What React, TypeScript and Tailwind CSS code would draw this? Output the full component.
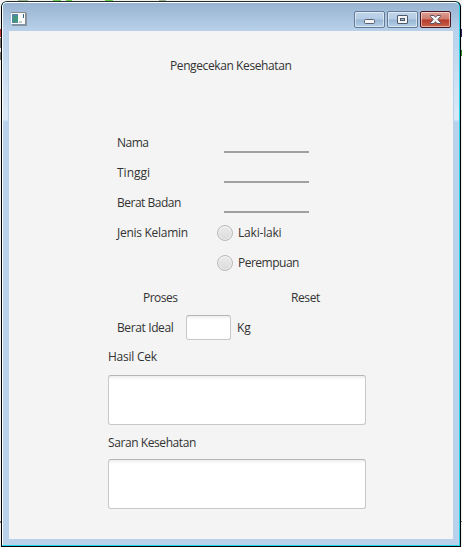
import React from "react";

const BUTTON =
  "relative flex h-[17px] w-[31px] items-center justify-center rounded-[2px] border shadow-[inset_0_0_0_1px_rgba(255,255,255,0.5)]";
const BLUE =
  "border-[#667a98] bg-[linear-gradient(#bfd5eb_0%,#b4cce4_48%,#98b6d4_52%,#b4cfe8_100%)]";
const RED =
  "border-[#4b1520] bg-[linear-gradient(#dda196_0%,#cf7a6c_48%,#b6392a_52%,#c9634b_100%)]";

function TitleBar() {
  return (
    <header className="flex h-7 shrink-0 items-start justify-between bg-[linear-gradient(#98b4d2,#b9d1ea)] pl-2 pr-[8px] pt-2">
      <svg className="mt-[1px]" width="16" height="14" shapeRendering="crispEdges">
        <rect x="1" y="1" width="15" height="13" fill="#8494a4" />
        <rect x="0" y="0" width="15" height="12" fill="#8c8c8c" />
        <rect x="0" y="1" width="14" height="11" fill="#fafafa" />
        <rect x="1" y="2" width="6" height="9" fill="#5686a4" />
        <rect x="2" y="4" width="5" height="6" fill="#43977f" />
        <rect x="12" y="2" width="1" height="4" fill="#346a91" />
        <rect x="8" y="9" width="3" height="2" fill="#c9c9c9" />
      </svg>
      <div className="flex gap-[2px]">
        <button aria-label="Minimize" className={`${BUTTON} ${BLUE}`}>
          <svg width="29" height="15" viewBox="0 0 29 15">
            <rect x="9.5" y="7.5" width="10" height="4" rx="1" fill="#f5f5f5" stroke="#596273" />
          </svg>
        </button>
        <button aria-label="Maximize" className={`${BUTTON} ${BLUE}`}>
          <svg width="29" height="15" viewBox="0 0 29 15">
            <rect x="9.5" y="3.5" width="10" height="8" rx="0.5" fill="#f5f5f5" stroke="#4d586a" />
            <rect x="12.5" y="6.5" width="4" height="2" fill="#9db9d5" stroke="#4d586a" />
          </svg>
        </button>
        <button aria-label="Close" className={`${BUTTON} ${RED}`}>
          <svg width="29" height="15" viewBox="0 0 29 15">
            <path
              d="M9.5 3.5H13L14.5 5.3L16 3.5H19.5V4.5L16.8 7.5L19.5 10.5V11.5H16L14.5 9.7L13 11.5H9.5V10.5L12.2 7.5L9.5 4.5Z"
              fill="#f5f5f5"
              stroke="#5b5663"
            />
          </svg>
        </button>
      </div>
    </header>
  );
}

function FieldRow({ label, spacing }: { label: string; spacing: string }) {
  return (
    <div className="flex h-[30px] pl-[9px]">
      <label className={`w-[107px] ${spacing}`}>{label}</label>
      <input className="h-[25px] w-[85px] border-b-2 border-[#a0a0a0] outline-none" />
    </div>
  );
}

function Radio({ label, spacing }: { label: string; spacing: string }) {
  return (
    <label className="flex h-[30px] items-start">
      <span className="mr-[5px] mt-[7px] h-4 w-4 rounded-full border border-[#b9b9b9] bg-[linear-gradient(#ececec,#dadada)] shadow-[inset_0_0_0_1px_rgba(255,255,255,0.45)]" />
      <span className={spacing}>{label}</span>
    </label>
  );
}

const BOX =
  "block resize-none rounded-[3px] border border-[#c8c8c8] border-t-[#b5b5b5] bg-[linear-gradient(#eeeeee_0px,#ffffff_4px)] outline-none";

function SideEdge({ right }: { right?: boolean }) {
  return (
    <div className={`flex w-1.5 shrink-0 flex-col bg-[#b9d1ea] ${right ? "pl-px" : "pr-px"}`}>
      <div className="h-[91px] bg-[linear-gradient(#b9d1ea_0%,#cbdef1_50%,#dce9f7_97%,#b9d1ea_100%)]" />
    </div>
  );
}

// Slivers of the desktop that stay visible around the window frame.
function DesktopEdge() {
  return (
    <svg className="absolute left-0 top-0" width="462" height="547" shapeRendering="crispEdges">
      <path d="M18 0.5h10M159 0.5h7" stroke="#9fb795" />
      <path d="M53 0.5h8M66 0.5h6M105 0.5h8" stroke="#6fcf52" />
      <path d="M0.5 29v8" stroke="#b83a32" />
      <path d="M0.5 38v10M0.5 52v8" stroke="#777777" />
      <path d="M461.5 29v8" stroke="#25255c" />
      <path d="M461.5 50v6" stroke="#2b8a1c" />
      <path d="M0.5 521v2M461.5 521v1" stroke="#777777" />
    </svg>
  );
}

export default function App() {
  return (
    <div className="relative h-[547px] w-[462px] overflow-hidden bg-[#f0f0f0] pl-px pt-px font-['Open_Sans','Noto_Sans',sans-serif] text-[12px] leading-[30px] text-[#333]">
      <DesktopEdge />
      <div className="relative flex h-[546px] w-[460px] flex-col rounded-t-[6px] border border-black border-t-[#222e30] bg-[#22d5ed]">
        <div className="mr-px mb-px flex min-h-0 flex-1 flex-col overflow-hidden rounded-t-[5px] border-l border-t border-white bg-[#b9d1ea]">
          <TitleBar />
          <div className="flex h-[508px] shrink-0">
            <SideEdge />
            <main className="w-[444px] bg-[#f4f4f4] pl-[99px] pt-5">
              <h1 className="h-[77px] pl-[62px] tracking-[-0.4px]">Pengecekan Kesehatan</h1>
              <FieldRow label="Nama" spacing="tracking-[-0.5px]" />
              <FieldRow label="Tinggi" spacing="tracking-[0px]" />
              <FieldRow label="Berat Badan" spacing="tracking-[-0.5px]" />
              <div className="flex h-[60px] pl-[9px]">
                <span className="w-[100px] tracking-[-0.28px]">Jenis Kelamin</span>
                <div>
                  <Radio label="Laki-laki" spacing="tracking-[-0.2px]" />
                  <Radio label="Perempuan" spacing="tracking-[-0.5px]" />
                </div>
              </div>
              <div className="mt-[5px] flex h-[30px] pl-[35px]">
                <button className="w-[148px] text-left tracking-[-0.5px]">Proses</button>
                <button className="text-left tracking-[-0.4px]">Reset</button>
              </div>
              <div className="flex h-[30px] pl-[9px]">
                <span className="w-[69px] tracking-[-0.38px]">Berat Ideal</span>
                <input className={`${BOX} mt-[2px] h-[25px] w-[45px]`} />
                <span className="ml-[6px]">Kg</span>
              </div>
              <label className="-mt-px block h-[33px] tracking-[-0.25px]">Hasil Cek</label>
              <textarea className={`${BOX} h-[50px] w-[258px]`} />
              <label className="mt-[3px] block h-[31px] tracking-[-0.42px]">Saran Kesehatan</label>
              <textarea className={`${BOX} h-[50px] w-[258px]`} />
            </main>
            <SideEdge right />
          </div>
        </div>
      </div>
    </div>
  );
}
